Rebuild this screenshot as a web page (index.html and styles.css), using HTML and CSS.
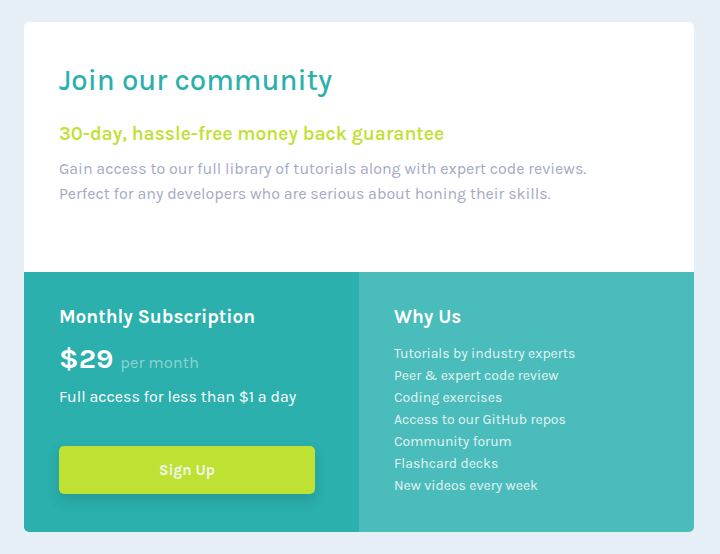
FILE: index.html
```html
<!DOCTYPE html>
<html lang="en">
<head>
<meta charset="utf-8">
<title>Single price grid</title>
<link rel="stylesheet" href="styles.css">
</head>
<body>
<main class="card">
  <section class="intro">
    <h1 class="title">Join our community</h1>
    <h2 class="subtitle">30-day, hassle-free money back guarantee</h2>
    <p class="lead">Gain access to our full library of tutorials along with expert code reviews.<br>Perfect for any developers who are serious about honing their skills.</p>
  </section>
  <div class="bottom">
    <section class="subscription">
      <h3 class="col-title">Monthly Subscription</h3>
      <p class="price"><span class="amount">$29</span><span class="period">per month</span></p>
      <p class="access">Full access for less than $1 a day</p>
      <button class="signup" type="button">Sign Up</button>
    </section>
    <section class="why">
      <h3 class="col-title">Why Us</h3>
      <ul class="features">
        <li>Tutorials by industry experts</li>
        <li>Peer &amp; expert code review</li>
        <li>Coding exercises</li>
        <li>Access to our GitHub repos</li>
        <li>Community forum</li>
        <li>Flashcard decks</li>
        <li>New videos every week</li>
      </ul>
    </section>
  </div>
</main>
</body>
</html>
```

FILE: styles.css
```css
* { box-sizing: border-box; }
html, body { margin: 0; padding: 0; }
body {
  background: #e6eef6;
  font-family: "Karla", "Noto Sans", sans-serif;
  padding: 22px 26px 22px 24px;
}
.card {
  width: 670px;
  height: 510px;
  border-radius: 5px;
  overflow: hidden;
  background: #fff;
  display: flex;
  flex-direction: column;
}
.intro {
  height: 250px;
  padding: 38px 35px 0;
}
.title {
  margin: 0;
  font-size: 29.4px;
  line-height: 40px;
  font-weight: 500;
  color: #2bb0ac;
}
.subtitle {
  margin: 21px 0 0;
  font-size: 19.3px;
  line-height: 26px;
  font-weight: 600;
  color: #bfe134;
}
.lead {
  margin: 9px 0 0;
  font-size: 16px;
  line-height: 25px;
  color: #a5a9c5;
}
.bottom {
  flex: 1;
  display: flex;
}
.subscription, .why {
  flex: 1;
  padding: 33px 35px 0;
  color: #fff;
}
.subscription { background: #2bb0ad; }
.why { background: #4abcbc; }
.col-title {
  margin: 0;
  font-size: 19px;
  line-height: 24px;
  font-weight: 700;
}
.price {
  margin: 12px 0 0;
  display: flex;
  align-items: baseline;
  gap: 7px;
}
.amount {
  font-size: 28.5px;
  font-weight: 700;
  line-height: 36px;
}
.period {
  font-size: 16.5px;
  color: #8ad3d2;
}
.access {
  margin: 9px 0 0;
  font-size: 16px;
  line-height: 22px;
}
.signup {
  margin-top: 38px;
  width: 256px;
  height: 48px;
  border: 0;
  border-radius: 5px;
  background: #bfe133;
  color: #eef6ee;
  font-family: inherit;
  font-size: 15px;
  font-weight: 700;
  box-shadow: 0 6px 12px rgba(20, 90, 90, 0.25);
}
.features {
  list-style: none;
  margin: 14px 0 0;
  padding: 0;
  font-size: 14px;
  line-height: 22px;
  color: #e3f4f3;
}
```
